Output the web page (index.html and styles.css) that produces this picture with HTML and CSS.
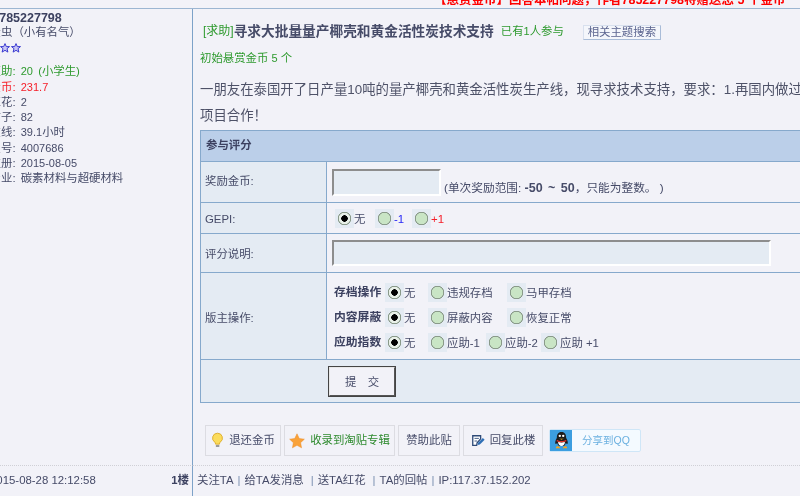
FILE: index.html
```html
<!DOCTYPE html>
<html lang="zh">
<head>
<meta charset="utf-8">
<title>寻求大批量量产椰壳和黄金活性炭技术支持</title>
<link rel="stylesheet" href="styles.css">
</head>
<body>
<div class="strip"><b class="reward">【悬赏金币】回答本帖问题，作者785227798将赠送您 5 个金币</b></div>
<div class="post">
  <aside class="side">
    <div class="side-in">
      <div class="name">785227798</div>
      <div>金虫（小有名气）</div>
      <div class="stars">
        <svg class="star" viewBox="0 0 10 10"><path d="M5 .6l1.300 3h3.200L7 5.700l.9 3.400L5 7.300 2.100 9.100 3 5.700.5 3.600h3.200z"/></svg>
        <svg class="star" viewBox="0 0 10 10"><path d="M5 .6l1.300 3h3.200L7 5.700l.9 3.400L5 7.300 2.100 9.100 3 5.700.5 3.600h3.200z"/></svg>
      </div>
      <div class="green">应助: <span class="n">20</span> (小学生)</div>
      <div class="red">金币: <span class="n">231.7</span></div>
      <div>红花: <span class="n">2</span></div>
      <div>帖子: <span class="n">82</span></div>
      <div>在线: <span class="n">39.1</span>小时</div>
      <div>虫号: <span class="n">4007686</span></div>
      <div>注册: <span class="n">2015-08-05</span></div>
      <div>专业: 碳素材料与超硬材料</div>
    </div>
  </aside>
  <main class="content">
    <div class="title-row">
      <span class="tag">[求助]</span><h1>寻求大批量量产椰壳和黄金活性炭技术支持</h1>
      <span class="joined">已有<span class="n">1</span>人参与</span>
      <span class="search">相关主题搜索</span>
    </div>
    <div class="bounty">初始悬赏金币 <span class="n">5</span> 个</div>
    <p class="text">一朋友在泰国开了日产量10吨的量产椰壳和黄金活性炭生产线，现寻求技术支持，要求：1.再国内做过类似项目</p>
    <p class="text">项目合作！</p>
    <table class="rate">
      <colgroup><col class="c1"><col class="c2"></colgroup>
      <tr class="h1"><th colspan="2">参与评分</th></tr>
      <tr class="r1">
        <td class="lab">奖励金币:</td>
        <td class="val"><div class="coin"><input class="box small" type="text"><span class="hint">(单次奖励范围: <b>-50 ~ 50</b>，只能为整数。 )</span></div></td>
      </tr>
      <tr class="r2">
        <td class="lab">GEPI:</td>
        <td class="val"><div class="opts gepi">
          <label class="o g1"><input type="radio" name="g" checked>无</label>
          <label class="o g2"><input type="radio" name="g"><span class="blue">-1</span></label>
          <label class="o"><input type="radio" name="g"><span class="red">+1</span></label>
        </div></td>
      </tr>
      <tr class="r3">
        <td class="lab">评分说明:</td>
        <td class="val"><input class="box wide" type="text"></td>
      </tr>
      <tr class="r4">
        <td class="lab">版主操作:</td>
        <td class="val">
          <div class="opts mod"><b>存档操作</b>
            <label class="o o1"><input type="radio" name="a" checked>无</label>
            <label class="o o2"><input type="radio" name="a">违规存档</label>
            <label class="o"><input type="radio" name="a">马甲存档</label>
          </div>
          <div class="opts mod"><b>内容屏蔽</b>
            <label class="o o1"><input type="radio" name="b" checked>无</label>
            <label class="o o2"><input type="radio" name="b">屏蔽内容</label>
            <label class="o"><input type="radio" name="b">恢复正常</label>
          </div>
          <div class="opts mod"><b>应助指数</b>
            <label class="o o1"><input type="radio" name="c" checked>无</label>
            <label class="o o4"><input type="radio" name="c">应助-1</label>
            <label class="o o5"><input type="radio" name="c">应助-2</label>
            <label class="o"><input type="radio" name="c">应助 +1</label>
          </div>
        </td>
      </tr>
      <tr class="r5"><td colspan="2"><button class="submit" type="button">提　交</button></td></tr>
    </table>
    <div class="actions">
      <a class="act a1"><svg class="ic" viewBox="0 0 16 20"><path d="M8 1a6 6 0 0 0-3.400 11c.7.6 1 1.300 1 2.500h4.800c0-1.200.3-1.900 1-2.500A6 6 0 0 0 8 1z" fill="#fbdc5c" stroke="#d9a520"/><path d="M6 15.500h4.200v2.500H6z" fill="#9a9a9a"/></svg>退还金币</a>
      <a class="act a2"><svg class="ic ic2" viewBox="0 0 20 20"><path d="M10 1l2.800 5.900 6.400.8-4.700 4.400 1.200 6.400L10 15.400l-5.700 3.100 1.200-6.400L.8 7.700l6.400-.8z" fill="#f9a23a" stroke="#ec8a22" stroke-width=".6"/></svg>收录到淘贴专辑</a>
      <a class="act a3">赞助此贴</a>
      <a class="act a4"><svg class="ic ic3" viewBox="0 0 16 16"><path d="M2 2h9v3.500L7 10l-.5 3H2z" fill="#fff" stroke="#2e4a78" stroke-width="1.500"/><path d="M4 5h5M4 8h3" stroke="#2e4a78"/><path d="M7.500 12.500l.6-2.600 5.500-5.400 2 2-5.500 5.400z" fill="#2f6fb5"/></svg>回复此楼</a>
      <a class="share"><span class="penguin"><svg viewBox="0 0 20 22"><path d="M10 1C6 1 4.500 4 4.500 8 3 10.500 2 13 3 15c1 .3 1.500-.5 2-1 .5 1.500 1 2.500 2 3.500h6c1-1 1.500-2 2-3.500.5.500 1 1.300 2 1 1-2 0-4.500-1.500-7C15.500 4 14 1 10 1z" fill="#1c1c1c"/><path d="M6 12.500c0 3 1.500 5 4 5s4-2 4-5c-2.500 1-5.500 1-8 0z" fill="#fff"/><path d="M4.500 10c3 2 8 2 11 0l.3 2c-3.500 1.500-8 1.500-11.600 0z" fill="#e0322a"/><path d="M7 8.300c1.800 1 4.200 1 6 0L10 10z" fill="#f7b21b"/><circle cx="8" cy="5.500" r="1.400" fill="#fff"/><circle cx="12" cy="5.500" r="1.400" fill="#fff"/><path d="M3.500 18.500c1.500-1.500 4-1 5 1.500H3.500zM16.500 18.500c-1.500-1.500-4-1-5 1.500h5z" fill="#f7a31b"/></svg></span><span class="share-t">分享到QQ</span></a>
    </div>
  </main>
  <div class="foot-l">
    <span class="time">2015-08-28 12:12:58</span><b class="floor">1楼</b>
  </div>
  <div class="foot-r">
    <span>关注TA</span><i>|</i><span>给TA发消息</span><i class="w">|</i><span>送TA红花</span><i class="w">|</i><span>TA的回帖</span><i>|</i><span class="ip">IP:117.37.152.202</span>
  </div>
</div>
</body>
</html>
```
FILE: styles.css
```css
html, body { margin: 0; padding: 0; }
body {
  width: 800px; height: 496px; overflow: hidden;
  background: #f2f2f8; color: #464b68;
  font: 11.4px/15.3px "Liberation Sans", "Noto Sans CJK SC", sans-serif;
  filter: blur(0.3px);
}
.n { font-size: 11px; }
.green { color: #2e9a2e; }
.red { color: #f5202a; }
.blue { color: #2a2af5; }
.strip {
  height: 8px; display: flex; align-items: flex-end; padding-left: 434px;
  white-space: nowrap; overflow: hidden;
}
.reward { color: #f00; font-size: 12.5px; line-height: 16px; }
.post {
  display: grid; grid-template-columns: 193px 607px; grid-template-rows: 456px 31px;
  border-top: 1px solid #9cb6d2; overflow: hidden;
}
.side { border-right: 1px solid #7da2c8; overflow: hidden; min-width: 0; }
.side-in { margin-left: -10.4px; padding-top: 2px; white-space: nowrap; word-spacing: 2px; }
.name { font-weight: bold; font-size: 12.5px; color: #3c4160; margin-left: 9.6px; line-height: 14px; }
.stars { height: 13px; margin: 0 0 10px 10.4px; display: flex; gap: 1px; align-items: center; padding-top: 1px; }
.star { width: 10px; height: 10px; fill: #c9c6f5; stroke: #3a3ad0; stroke-width: 1; }
.content { padding: 0 0 0 7px; min-width: 0; overflow: hidden; white-space: nowrap; }
.title-row { display: flex; align-items: center; height: 16px; margin-top: 15px; padding-left: 3px; }
.tag { color: #2e9a2e; font-size: 12px; }
h1 { margin: 0; font-size: 13.7px; font-weight: bold; color: #464b68; line-height: 16px; }
.joined { color: #2e9a2e; margin-left: 7px; }
.search {
  margin-left: 19px; width: 78px; height: 15px; box-sizing: border-box;
  border: 1px solid #d8e0ee; border-right-color: #a9bcd8; border-bottom-color: #a9bcd8;
  background: #f4f6fb; color: #5c6590; font-size: 11.4px; line-height: 13px; text-align: center;
}
.bounty { color: #2e9a2e; margin-top: 10px; height: 16px; line-height: 16px; }
.text { margin: 0; font-size: 13.4px; line-height: 26px; color: #4e5268; }
.bounty + .text { margin-top: 11px; }
.rate { border-collapse: collapse; table-layout: fixed; width: 640px; margin-top: 1px; }
.c1 { width: 126px; }
.rate th, .rate td { border: 1px solid #86a9cc; padding: 0; }
.rate th { background: #bbcfe9; height: 30px; text-align: left; padding-left: 5px; font-size: 11.4px; color: #3c4160; }
.lab { background: #e4ebf3; padding-left: 4px !important; }
.val { background: #f2f2f8; padding-left: 5px !important; }
.r1 td { height: 40px; }
.r2 td { height: 26px; padding-top: 4px; }
.r3 td { height: 38px; }
.r3 .lab { height: 35px; padding-top: 3px; }
.r4 td { height: 81px; padding-top: 5px; }
.r5 td { height: 42px; background: #e4ebf3; padding-left: 127px; }
.box {
  display: block; box-sizing: border-box; margin: 0; padding: 0; background: #e4ebf3;
  border: 2px solid; border-color: #8d8d8d #fff #fff #8d8d8d;
}
.small { width: 109px; height: 27px; }
.wide { width: 439px; height: 26px; }
.coin { display: flex; align-items: flex-end; }
.hint { margin-left: 3px; line-height: 15px; font-size: 11.7px; }
.hint b { font-size: 12.5px; word-spacing: 2px; }
.opts { display: flex; align-items: center; }
.gepi { padding-left: 3px; }
.mod { height: 25px; padding-left: 2px; }
.mod b { width: 51px; color: #3c4160; margin-bottom: 2px; font-size: 11.8px; }
.o { display: flex; align-items: center; }
.o input {
  appearance: none; -webkit-appearance: none; margin: 0 0 3px 0; width: 19px; height: 19px; flex: none;
  background: radial-gradient(circle, #c9e5c5 0 5.5px, #8a9a8a 6px 6.5px, #e4ebf3 7px);
}
.o input:checked { background: radial-gradient(circle, #000 0 3px, #e8f0e8 3.5px 5.5px, #8a9a8a 6px 6.5px, #e4ebf3 7px); }
.g1 { width: 40px; }
.g2 { width: 37px; }
.o1 { width: 43px; }
.o2 { width: 79px; }
.o4 { width: 58px; }
.o5 { width: 55px; }
.submit {
  display: block; width: 68px; height: 31px; box-sizing: border-box; margin: 0;
  border: 2px solid; border-color: #e8e8e8 #555 #555 #e8e8e8; outline: 1px solid #444; outline-offset: -1px;
  background: #f2f2f8; color: #464b68; font: 11.4px "Liberation Sans", "Noto Sans CJK SC", sans-serif;
}
.actions { display: flex; align-items: center; gap: 3px; margin: 22px 0 0 5px; height: 31px; }
.act {
  display: flex; align-items: center; justify-content: center; height: 31px; box-sizing: border-box;
  border: 1px solid #dcdce2; gap: 5px;
}
.a1 { width: 76px; }
.a2 { width: 111px; color: #2e8a2e; }
.a3 { width: 62px; }
.a4 { width: 80px; }
.ic { width: 13px; height: 17px; }
.ic2 { width: 16px; height: 16px; }
.ic3 { width: 14px; height: 14px; }
.share {
  display: flex; width: 92px; height: 23px; margin-left: 3px; box-sizing: border-box;
  border: 1px solid #cfe6f7; border-radius: 2px; background: #f4faff; color: #6ab0e0;
}
.penguin { width: 22px; background: #3c9ee0; display: flex; align-items: center; justify-content: center; }
.penguin svg { width: 17px; height: 19px; }
.share-t { flex: 1; text-align: center; line-height: 21px; font-size: 10.5px; }
.foot-l {
  border-right: 1px solid #7da2c8; border-top: 1px dotted #d0d0d6;
  display: flex; justify-content: space-between; align-items: center; padding-right: 3px; overflow: hidden; white-space: nowrap;
}
.time { margin-left: -10px; }
.floor { color: #3c4160; }
.foot-r {
  border-top: 1px dotted #d0d0d6; display: flex; align-items: center; padding-left: 4px; white-space: nowrap; overflow: hidden;
}
.foot-r i { font-style: normal; color: #7a8fb0; margin: 0 4px; }
.foot-r i.w { margin-left: 7px; }
```
